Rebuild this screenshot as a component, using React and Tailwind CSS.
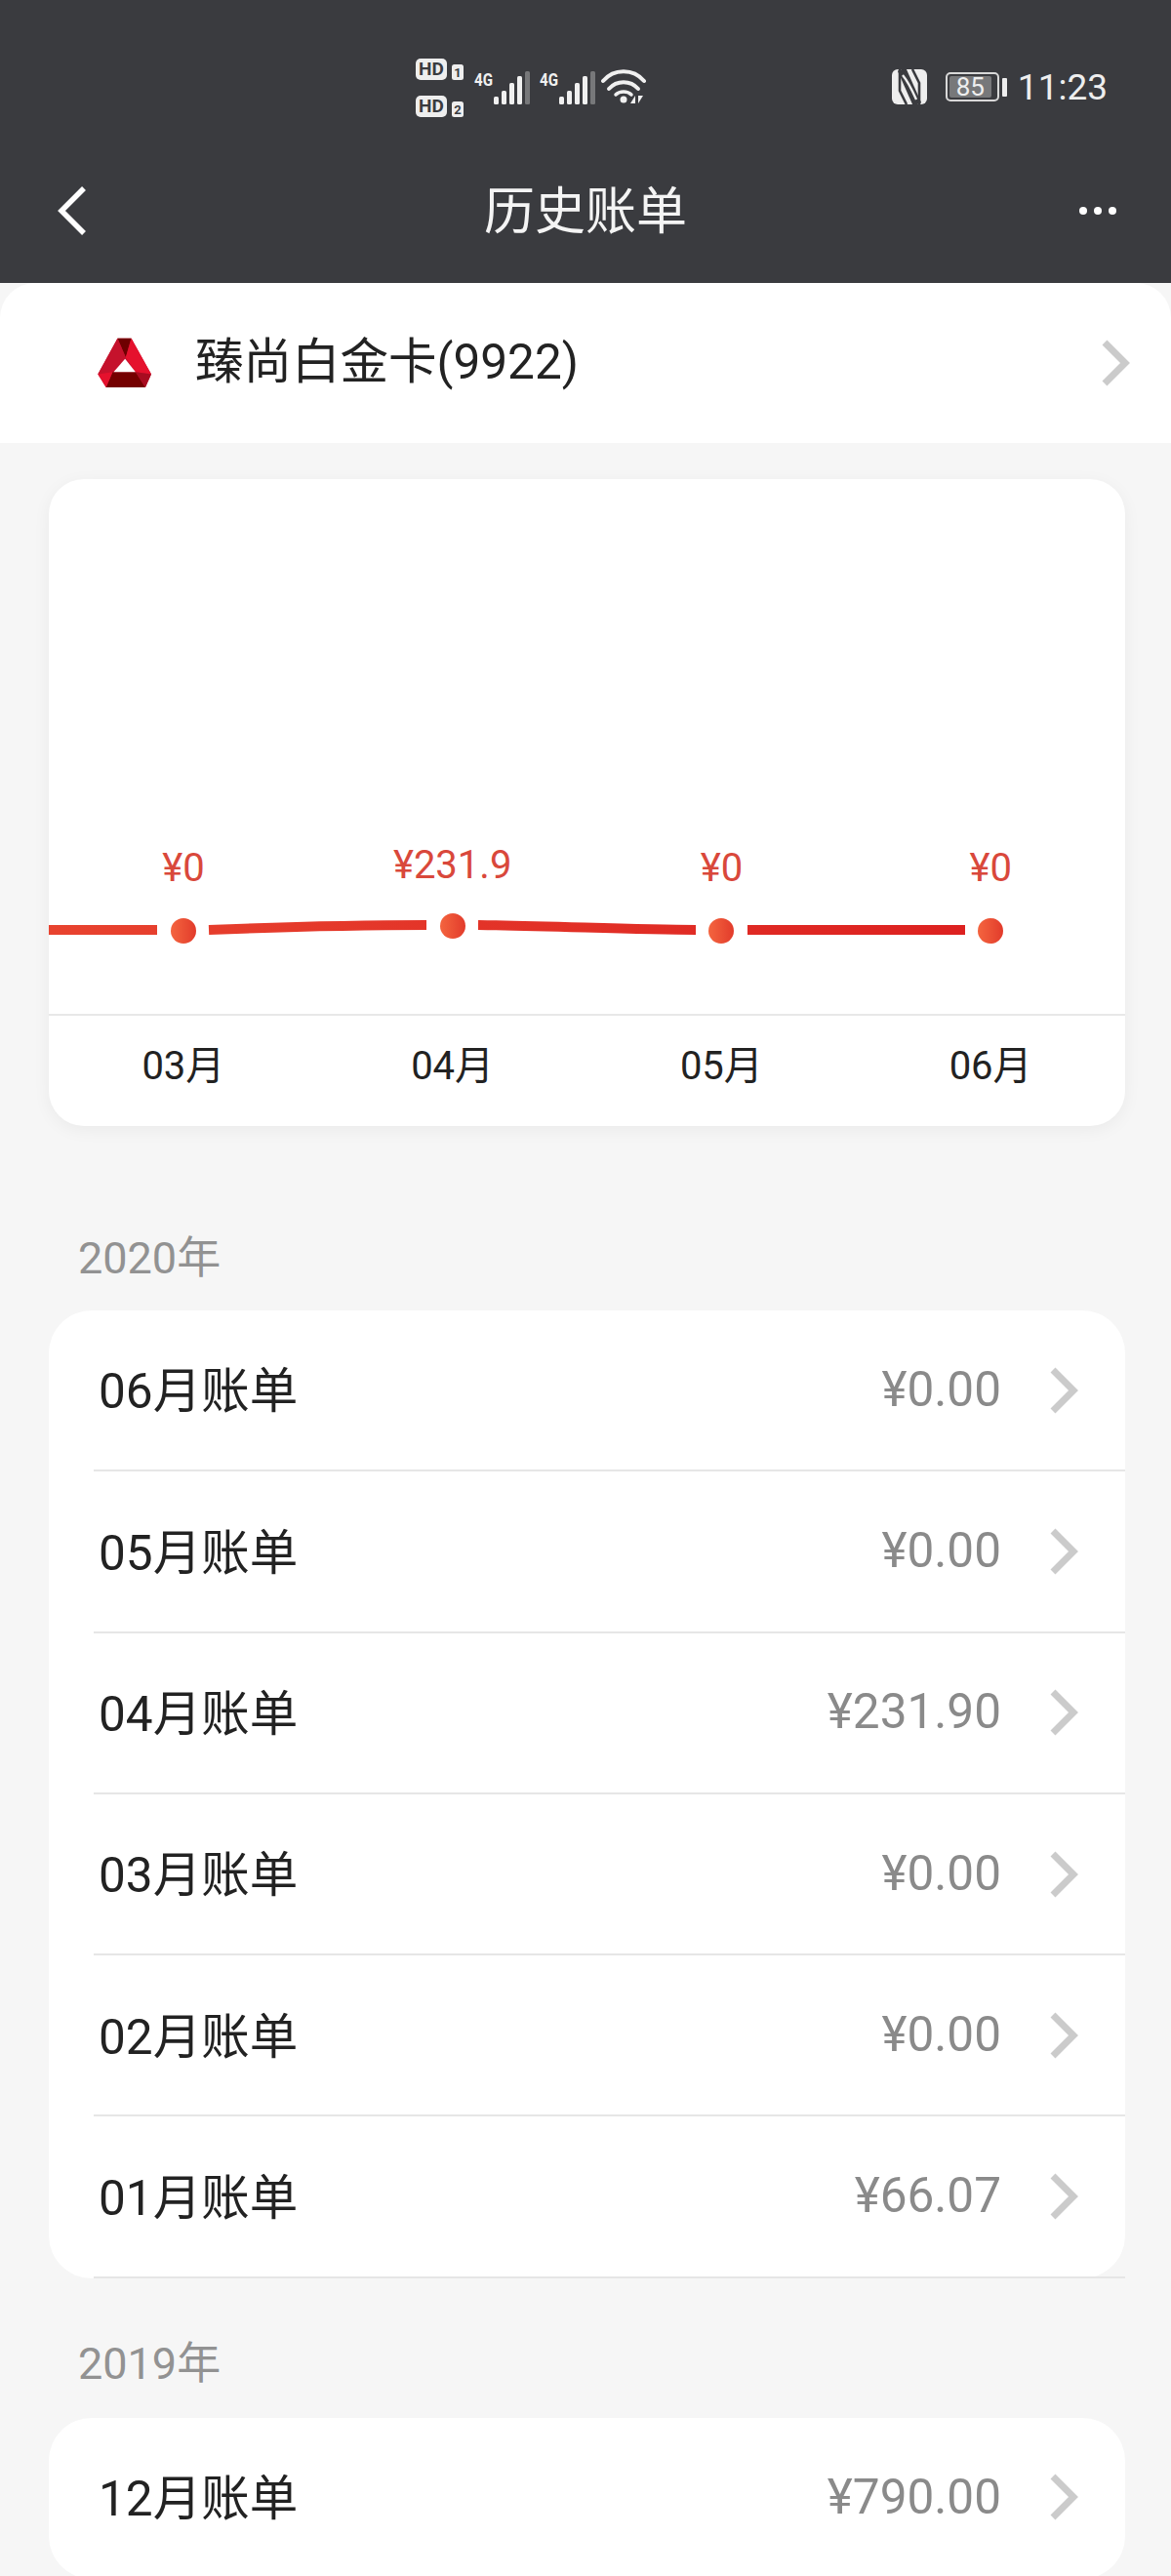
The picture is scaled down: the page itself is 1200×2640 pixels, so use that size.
const bills2020 = [
  ["06月账单", "¥0.00"],
  ["05月账单", "¥0.00"],
  ["04月账单", "¥231.90"],
  ["03月账单", "¥0.00"],
  ["02月账单", "¥0.00"],
  ["01月账单", "¥66.07"],
];
const bills2019 = [["12月账单", "¥790.00"]];

const chart = [
  { v: "¥0", m: "03月", raised: false },
  { v: "¥231.9", m: "04月", raised: true },
  { v: "¥0", m: "05月", raised: false },
  { v: "¥0", m: "06月", raised: false },
];

function Chevron() {
  return (
    <svg width="30" height="48" viewBox="0 0 30 48" fill="none" className="shrink-0">
      <path d="M4 3 L25 24 L4 45" stroke="#cbcbcb" strokeWidth="7" />
    </svg>
  );
}

function Signal({ x }) {
  const bars = [[0, 98, 0], [8, 92, 0], [16, 84, 0], [24, 77, 0], [32, 72, 1]];
  return (
    <g transform={`translate(${x} -55)`}>
      <text x="-20" y="87" fontSize="19" fontWeight="700" fill="#f0f0f0" textLength="19" lengthAdjust="spacingAndGlyphs" fontFamily="Roboto, sans-serif">4G</text>
      {bars.map(([dx, top, grey]) => (
        <rect key={dx} x={dx} y={top} width="5" height={106 - top} rx="1.5" fill={grey ? "#77787a" : "#f0f0f0"} />
      ))}
    </g>
  );
}

function Hd({ y, n }) {
  return (
    <g transform={`translate(0 ${y})`}>
      <rect x="0" y="0" width="32" height="22" rx="5" fill="#eeeeee" />
      <text x="16" y="17" textAnchor="middle" fontSize="19" fontWeight="700" fill="#3a3b3f" fontFamily="Roboto, sans-serif">HD</text>
      <rect x="37" y="6" width="12" height="16" rx="2.5" fill="#eeeeee" />
      <text x="43" y="19" textAnchor="middle" fontSize="13" fontWeight="700" fill="#3a3b3f" fontFamily="Roboto, sans-serif">{n}</text>
    </g>
  );
}

function StatusIcons() {
  return (
    <svg width="236" height="66" viewBox="0 0 236 66" className="block">
      <Hd y={4} n="1" />
      <Hd y={42} n="2" />
      <Signal x={80} />
      <Signal x={147} />
      <g transform="translate(192 -55)" fill="none" stroke="#f0f0f0" strokeLinecap="round">
        <path d="M2 83 C13 70 33 70 44 83" strokeWidth="4" transform="translate(-2 -1)" />
        <path d="M8 90 C16 81 30 81 38 90" strokeWidth="4" transform="translate(-2 0)" />
        <path d="M15 96 C19 92 27 92 31 96" strokeWidth="3.5" transform="translate(-2 0)" />
        <circle cx="21" cy="101" r="3.5" fill="#f0f0f0" stroke="none" />
        <path d="M28 105 L33 97 L33 105 Z" fill="#f0f0f0" stroke="none" />
        <path d="M36 97 L36 105 L41 97 Z" fill="#f0f0f0" stroke="none" />
      </g>
    </svg>
  );
}

function Nfc() {
  return (
    <svg width="36" height="36" viewBox="0 0 36 36" className="block" fill="none">
      <rect x="0" y="0" width="36" height="36" rx="6" fill="#eeeeee" />
      <path d="M8 0 L8 22 L15 36" stroke="#3a3b3f" strokeWidth="2.6" />
      <path d="M28 36 L28 14 L21 0" stroke="#3a3b3f" strokeWidth="2.6" />
      <path d="M10 0 L26 36" stroke="#3a3b3f" strokeWidth="9" />
      <path d="M11 6 C16 12 21 22 25 31" stroke="#eeeeee" strokeWidth="2.4" />
    </svg>
  );
}

function Battery() {
  return (
    <div className="flex items-center gap-[3px]">
      <div className="w-[55px] h-[30px] rounded-[5px] border-2 border-[#d8d8d8] p-[2px] flex">
        <div className="w-[43px] h-full bg-[#77787a] rounded-[2px] flex items-center justify-center text-[26px] leading-none text-[#eeeeee]">85</div>
      </div>
      <div className="w-[5px] h-[19px] bg-[#eeeeee] rounded-[1px]" />
    </div>
  );
}

function Logo() {
  return (
    <svg width="56" height="52" viewBox="120 80 165 155" className="block">
      <polygon points="180,82 222,82 283,192 265,232 145,232 120,192" fill="#c8102e" />
      <polygon points="180,82 222,82 205,140" fill="#6f0000" />
      <polygon points="180,82 205,140 165,185 120,192" fill="#c5122c" />
      <polygon points="222,82 283,192 235,185 205,140" fill="#e5112d" />
      <polygon points="165,185 235,185 265,232 145,232" fill="#750000" />
      <polygon points="120,192 165,185 145,232" fill="#e5112d" />
      <polygon points="283,192 235,185 265,232" fill="#a80c20" />
      <polygon points="203,145 235,185 168,185" fill="#ffffff" />
    </svg>
  );
}

function BillCard({ rows }) {
  return (
    <div className="mx-[50px] w-[1103px] bg-white rounded-[44px]">
      {rows.map(([label, amount]) => (
        <div key={label} className="ml-[46px] h-[165.3px] pl-[5px] pr-[48px] flex items-center justify-between border-b-2 border-[#e6e6e6]">
          <span className="pt-[5px] text-[49.5px] leading-none text-[#222222]">{label}</span>
          <div className="flex items-center gap-[49px]">
            <span className="text-[49.5px] leading-none text-[#8a8a8a]">{amount}</span>
            <Chevron />
          </div>
        </div>
      ))}
    </div>
  );
}

export default function App() {
  return (
    <div className="w-[1200px] h-[2640px] overflow-hidden bg-[#f6f6f6] font-['Roboto','Noto_Sans_CJK_SC',sans-serif]">
      <header className="h-[290px] bg-[#3a3b3f] flex flex-col">
        <div className="h-[178px] pl-[426px] pr-[65px] flex items-center justify-between">
          <StatusIcons />
          <div className="flex items-center">
            <Nfc />
            <div className="ml-[19px]"><Battery /></div>
            <span className="ml-[11px] text-[37px] leading-none text-[#eeeeee]">11:23</span>
          </div>
        </div>
        <div className="h-[76px] pl-[58px] pr-[56px] flex items-center justify-between">
          <svg width="32" height="52" viewBox="0 0 32 52" fill="none" className="block">
            <path d="M28 3 L5 26 L28 49" stroke="#ffffff" strokeWidth="5.5" />
          </svg>
          <h1 className="mt-[4px] ml-[4px] text-[52px] leading-none font-normal text-[#f4f4f4]">历史账单</h1>
          <div className="flex gap-[7px] w-[38px]">
            <span className="w-[8px] h-[8px] shrink-0 rounded-full bg-white" />
            <span className="w-[8px] h-[8px] shrink-0 rounded-full bg-white" />
            <span className="w-[8px] h-[8px] shrink-0 rounded-full bg-white" />
          </div>
        </div>
      </header>

      <div className="h-[164px] bg-white rounded-t-[36px] pl-[100px] pr-[42px] flex items-center justify-between">
        <div className="flex items-center gap-[44px]">
          <Logo />
          <span className="text-[49.5px] leading-none text-[#222222]">臻尚白金卡(9922)</span>
        </div>
        <Chevron />
      </div>

      <section className="mt-[37px] ml-[50px] w-[1103px] h-[663px] bg-white rounded-[36px] shadow-[0_4px_18px_rgba(0,0,0,0.05)]">
        <div className="relative h-[550px] border-b-2 border-[#e8e8e8]">
          <svg width="1103" height="548" viewBox="0 0 1103 548" fill="none" className="absolute left-0 top-0">
            <defs>
              <linearGradient id="line" gradientUnits="userSpaceOnUse" x1="0" y1="0" x2="1000" y2="0">
                <stop offset="0" stopColor="#e8432f" />
                <stop offset="1" stopColor="#dc1f1f" />
              </linearGradient>
            </defs>
            <path d="M0 462 H111" stroke="url(#line)" strokeWidth="10" />
            <path d="M164 462 C240 459 320 457 387 457" stroke="url(#line)" strokeWidth="10" />
            <path d="M440 457 C520 458 600 462 663 462" stroke="url(#line)" strokeWidth="10" />
            <path d="M716 462 H939" stroke="url(#line)" strokeWidth="10" />
          </svg>
          <div className="relative h-full grid grid-cols-4">
            {chart.map((c) => (
              <div key={c.m} className={`flex flex-col items-center justify-end ${c.raised ? "pb-[77px]" : "pb-[72px]"}`}>
                <span className={`text-[40px] leading-[44px] text-[#d9483b] ${c.raised ? "mb-[27px]" : "mb-[29px]"}`}>{c.v}</span>
                <span className="w-[26px] h-[26px] rounded-full bg-gradient-to-r from-[#f4643f] to-[#e23a2b]" />
              </div>
            ))}
          </div>
        </div>
        <div className="h-[113px] pb-[10px] grid grid-cols-4">
          {chart.map((c) => (
            <div key={c.m} className="flex items-center justify-center text-[40px] leading-none text-[#222222]">{c.m}</div>
          ))}
        </div>
      </section>

      <h2 className="mt-[113px] mb-[30px] ml-[80px] text-[45px] leading-[46px] font-normal text-[#929292]">2020年</h2>
      <BillCard rows={bills2020} />
      <h2 className="mt-[65px] mb-[32px] ml-[80px] text-[45px] leading-[46px] font-normal text-[#929292]">2019年</h2>
      <BillCard rows={bills2019} />
    </div>
  );
}
